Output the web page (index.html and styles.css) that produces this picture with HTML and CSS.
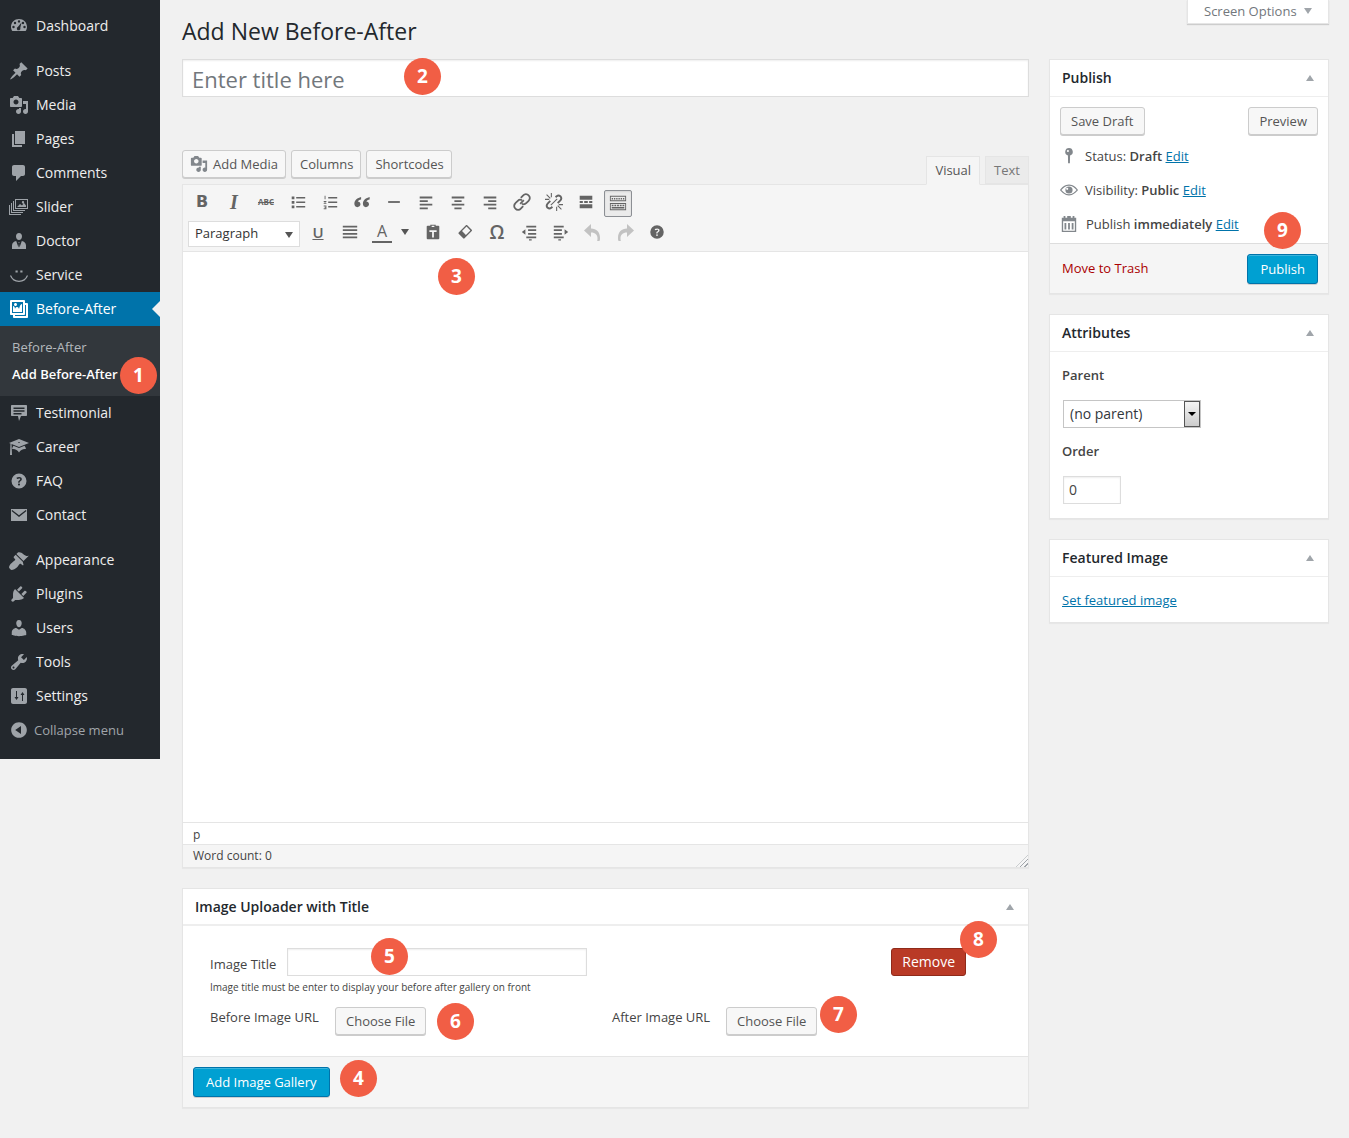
FILE: index.html
```html
<!doctype html>
<html lang="en-US">

<head>
    <meta charset="utf-8" />
    <title>Add New Before-After</title>

    <link rel="stylesheet" href="styles.css">
</head>

<body>
    <svg class="sprite" xmlns="http://www.w3.org/2000/svg">
        <symbol id="i-dashboard" viewBox="0 0 20 20"><path fill-rule="evenodd" d="M10 3c4.400 0 8 3.400 8 7.700 0 1.700-.5 3.200-1.400 4.300H3.400C2.500 13.900 2 12.400 2 10.700 2 6.400 5.600 3 10 3zM10 4.200a1.200 1.200 0 1 0 0 2.400 1.200 1.200 0 0 0 0-2.400zM6 5.800a1.200 1.200 0 1 0 0 2.400 1.200 1.200 0 0 0 0-2.400zM14 5.800a1.200 1.200 0 1 0 0 2.400 1.200 1.200 0 0 0 0-2.400zM4.500 9.800a1.200 1.200 0 1 0 0 2.400 1.200 1.200 0 0 0 0-2.400zM15.500 9.800a1.200 1.200 0 1 0 0 2.400 1.200 1.200 0 0 0 0-2.400zM12.500 6.500L9 10.800a1.800 1.800 0 1 0 2.300 1z"/></symbol>
        <symbol id="i-post" viewBox="0 0 20 20"><path d="M10.440 3.020l1.820-1.820 6.360 6.350-1.830 1.820c-1.050-.68-2.480-.57-3.410.36l-.75.75c-.92.93-1.040 2.350-.35 3.410l-1.830 1.820-2.410-2.410-2.800 2.790c-.42.42-3.380 2.710-3.800 2.290s1.860-3.390 2.280-3.810l2.790-2.790L4.100 9.360l1.830-1.820c1.050.69 2.480.57 3.400-.36l.75-.75c.93-.92 1.050-2.350.36-3.410z"/></symbol>
        <symbol id="i-media" viewBox="0 0 20 20"><path fill-rule="evenodd" d="M13 11V4c0-.55-.45-1-1-1h-1.670L9 1H5L3.670 3H2c-.55 0-1 .45-1 1v7c0 .55.45 1 1 1h10c.55 0 1-.45 1-1zM7 4.500c1.380 0 2.500 1.120 2.500 2.500S8.380 9.500 7 9.500 4.500 8.380 4.500 7 5.620 4.500 7 4.500zM14 6h5v10.500c0 1.380-1.120 2.500-2.500 2.500S14 17.880 14 16.500s1.120-2.500 2.500-2.500c.17 0 .34.02.5.05V9h-3V6zm-4 8.050V13h2v3.500c0 1.380-1.120 2.500-2.500 2.500S7 17.880 7 16.500 8.120 14 9.500 14c.17 0 .34.02.5.05z"/></symbol>
        <symbol id="i-pages" viewBox="0 0 20 20"><path d="M6 15V2h10v13H6zm-1 1h8v2H3V5h2v11z"/></symbol>
        <symbol id="i-comments" viewBox="0 0 20 20"><path d="M5 2h9c1.100 0 2 .9 2 2v7c0 1.100-.9 2-2 2h-2l-5 5v-5H5c-1.100 0-2-.9-2-2V4c0-1.100.9-2 2-2z"/></symbol>
        <symbol id="i-slider" viewBox="0 0 20 20"><path fill-rule="evenodd" d="M6 2h13v10H6zM7 3v8h11V3zM8 10l3-3 2 1.500 2-2.500 2 2.500V10zM14 4a1.200 1.200 0 1 0 0 2.400A1.200 1.200 0 0 0 14 4zM4 4h1v9h11v1H4zM2 6h1v9h11v1H2zM0 8h1v9h11v1H0z"/></symbol>
        <symbol id="i-doctor" viewBox="0 0 20 20"><path d="M10 2c1.900 0 3 1.400 3 3.200 0 2-1.200 3.800-3 3.800S7 7.200 7 5.200C7 3.400 8.100 2 10 2zM7.200 10l2.300 6.500.5-4-.6-1.500h1.200l-.6 1.500.5 4 2.300-6.500c2.300.3 4.200 1.900 4.200 4.500V18H3v-3.500C3 11.900 4.900 10.300 7.200 10z"/></symbol>
        <symbol id="i-service" viewBox="0 0 20 20"><path d="M6.500 5.500h2.200v2H6.500zM11.300 5.500h2.200v2h-2.200z"/><path d="M1.500 10.500c1.500 3.700 4.700 5.800 8.500 5.800s7-2.100 8.500-5.800" fill="none" stroke="currentColor" stroke-width="1.200"/></symbol>
        <symbol id="i-gallery" viewBox="0 0 20 20"><path fill-rule="evenodd" d="M16 4h1.960c.57 0 1.040.47 1.040 1.040v12.920c0 .57-.47 1.040-1.040 1.040H5.040C4.470 19 4 18.530 4 17.960V16H2.040C1.470 16 1 15.530 1 14.960V2.040C1 1.470 1.470 1 2.040 1h12.920c.57 0 1.040.47 1.040 1.040V4zM3 14h11V3H3v11zm5-8.500C8 4.670 7.330 4 6.500 4S5 4.670 5 5.500 5.670 7 6.500 7 8 6.330 8 5.500zm2 4.500s1-5 3-5v8H4V7c2 0 2 3 2 3s.33-2 2-2 2 2 2 2zm7 7V6h-1v8.960c0 .57-.47 1.040-1.040 1.040H6v1h11z"/></symbol>
        <symbol id="i-status" viewBox="0 0 20 20"><path fill-rule="evenodd" d="M3 2h14c.6 0 1 .4 1 1v9c0 .6-.4 1-1 1h-5l-2 5-1-5H3c-.6 0-1-.4-1-1V3c0-.6.4-1 1-1zM4.500 4.500v1.500h11V4.500zM4.500 7.200v1.500h11V7.200zM4.500 9.900v1.500h8V9.900z"/></symbol>
        <symbol id="i-learn" viewBox="0 0 20 20"><path fill-rule="evenodd" d="M10 10L2.540 7.020 3 18H1l.48-11.410L0 6l10-4 10 4zm0-5c-.55 0-1 .22-1 .5s.45.5 1 .5 1-.22 1-.5-.45-.5-1-.5zm0 6l5.570-2.230c.71.94 1.200 2.070 1.360 3.300-.3-.04-.61-.07-.93-.07-2.550 0-4.780 1.370-6 3.410C8.780 13.370 6.550 12 4 12c-.32 0-.63.03-.93.07.16-1.230.65-2.360 1.360-3.300z"/></symbol>
        <symbol id="i-help" viewBox="0 0 20 20"><path fill-rule="evenodd" d="M10 2.500a7.500 7.500 0 1 0 0 15 7.500 7.500 0 0 0 0-15zM10.800 11.800H9.200v-.5c0-.4.1-.7.2-1 .2-.3.4-.5.8-.8.4-.3.6-.5.8-.7.1-.2.2-.4.2-.6 0-.3-.1-.5-.3-.6-.2-.1-.5-.2-.8-.2-.6 0-1.200.2-2 .6l-.7-1.300c.9-.5 1.800-.7 2.800-.7.8 0 1.400.2 1.900.6s.7.9.7 1.600c0 .4-.1.8-.3 1.100-.2.3-.6.7-1.100 1-.4.3-.6.5-.7.6-.1.2-.1.4-.1.6zM10 12.400c.6 0 1 .4 1 1s-.4 1-1 1-1-.4-1-1 .4-1 1-1z"/></symbol>
        <symbol id="i-mail" viewBox="0 0 20 20"><path fill-rule="evenodd" d="M2 4h16v12H2zM3.200 5l6.800 5.200L16.800 5l.7 1-7.500 6-7.500-6z"/></symbol>
        <symbol id="i-appearance" viewBox="0 0 20 20"><path d="M14.480 11.060L7.410 3.990l1.500-1.500c.5-.56 2.300-.47 3.510.32 1.210.8 1.430 1.280 2.910 2.100 1.180.64 2.450 1.260 4.450.85zm-.71.71L6.700 4.700 4.930 6.470c-.39.39-.39 1.020 0 1.410l1.060 1.060c.39.39.39 1.030 0 1.420-.6.6-1.430 1.110-2.210 1.690-.35.26-.7.53-1.010.84C1.430 13.230 0 16.240 0 17.180 0 18.130 1.870 20 2.820 20c.94 0 3.950-1.430 5.290-2.770.31-.31.58-.66.84-1.010.58-.78 1.090-1.610 1.690-2.210.39-.39 1.030-.39 1.420 0l1.060 1.060c.39.39 1.020.39 1.410 0z"/></symbol>
        <symbol id="i-plugins" viewBox="0 0 20 20"><path d="M13.110 4.360L9.870 7.600 8 5.730l3.240-3.240c.35-.34 1.050-.2 1.560.32.52.51.66 1.210.31 1.550zm-8 1.770l.91-1.120 9.010 9.010-1.190.84c-.71.71-2.630 1.160-3.820 1.160H6.140L4.900 17.260c-.59.59-1.540.59-2.120 0-.59-.58-.59-1.530 0-2.120l1.240-1.240v-3.880c0-1.130.4-3.190 1.090-3.890zm7.260 3.970l3.240-3.240c.34-.35 1.040-.21 1.550.31.52.51.66 1.210.31 1.550l-3.240 3.250z"/></symbol>
        <symbol id="i-users" viewBox="0 0 20 20"><path d="M10 9.250c-2.270 0-2.730-3.440-2.730-3.440C7 4.020 7.820 2 9.970 2c2.160 0 2.980 2.020 2.710 3.810 0 0-.41 3.440-2.680 3.440zm0 2.570L12.720 10c2.390 0 4.520 2.330 4.520 4.530v2.490s-3.650 1.130-7.240 1.130c-3.650 0-7.240-1.130-7.240-1.130v-2.490c0-2.250 1.940-4.480 4.470-4.480z"/></symbol>
        <symbol id="i-tools" viewBox="0 0 20 20"><path fill-rule="evenodd" d="M16.680 9.770c-1.340 1.340-3.300 1.670-4.950.99l-5.410 6.520c-.99.99-2.590.99-3.580 0s-.99-2.590 0-3.570l6.520-5.420c-.68-1.650-.35-3.610.99-4.950 1.280-1.280 3.120-1.620 4.720-1.060l-2.890 2.890 2.820 2.820 2.860-2.870c.53 1.580.18 3.390-1.080 4.650zM3.810 16.210c.4.39 1.040.39 1.430 0 .4-.4.4-1.040 0-1.430-.39-.4-1.030-.4-1.430 0-.39.39-.39 1.030 0 1.430z"/></symbol>
        <symbol id="i-settings" viewBox="0 0 20 20"><path fill-rule="evenodd" d="M18 16V4c0-1.100-.9-2-2-2H4c-1.100 0-2 .9-2 2v12c0 1.100.9 2 2 2h12c1.100 0 2-.9 2-2zM8 11h1.500L7.500 14l-2-3H7V5h1zM13 9h-1.500l2-3 2 3H14v6h-1z"/></symbol>
        <symbol id="i-collapse" viewBox="0 0 20 20"><path fill-rule="evenodd" d="M10 2.160c4.330 0 7.840 3.510 7.840 7.840s-3.510 7.840-7.840 7.840S2.160 14.330 2.160 10 5.710 2.160 10 2.160zm2 11.720V6.120L6.180 9.970z"/></symbol>
        <symbol id="i-ul" viewBox="0 0 20 20"><path d="M3 4h3v3H3zM3 9h3v3H3zM3 14h3v3H3zM8 4.500h10V6H8zM8 9.500h10V11H8zM8 14.500h10V16H8z"/></symbol>
        <symbol id="i-ol" viewBox="0 0 20 20"><path d="M8 4.500h10V6H8zM8 9.500h10V11H8zM8 14.500h10V16H8z"/><path d="M4 3h1v4H4zM3 9h3v1l-2 1h2v1H3v-1l2-1H3zM3 14h3v4H3v-1h2v-.5H4v-1h1V15H3z"/></symbol>
        <symbol id="i-quote" viewBox="0 0 20 20"><path d="M9 4.500C5 5.500 1.500 8 1.500 12c0 2.200 1.400 3.700 3.300 3.700S8.300 14.400 8.300 12.600 7 9.500 5.300 9.500C5.600 8.500 7.300 7.500 9 7.200zM18.500 4.500C14.500 5.500 11 8 11 12c0 2.200 1.400 3.700 3.300 3.700s3.500-1.300 3.500-3.100-1.300-3.100-3-3.100c.3-1 2-2 3.700-2.300z"/></symbol>
        <symbol id="i-hr" viewBox="0 0 20 20"><path d="M3.500 9h13v2h-13z"/></symbol>
        <symbol id="i-left" viewBox="0 0 20 20"><path d="M3 4h14v2H3zM3 8h9v2H3zM3 12h14v2H3zM3 16h9v2H3z"/></symbol>
        <symbol id="i-center" viewBox="0 0 20 20"><path d="M3 4h14v2H3zM6 8h8v2H6zM3 12h14v2H3zM6 16h8v2H6z"/></symbol>
        <symbol id="i-right" viewBox="0 0 20 20"><path d="M3 4h14v2H3zM8 8h9v2H8zM3 12h14v2H3zM8 16h9v2H8z"/></symbol>
        <symbol id="i-link" viewBox="2.500 2.500 15 15"><path fill="none" stroke="currentColor" stroke-width="1.500" d="M8.500 11.500l3-3M9 6.500l2-2a3 3 0 0 1 4.500 0 3 3 0 0 1 0 4.500l-2 2a3 3 0 0 1-3.500.5M11 13.500l-2 2a3 3 0 0 1-4.500 0 3 3 0 0 1 0-4.500l2-2a3 3 0 0 1 3.500-.5"/></symbol>
        <symbol id="i-unlink" viewBox="1.500 1.500 17 17"><path fill="none" stroke="currentColor" stroke-width="1.800" d="M11.500 5.500l1-1a3 3 0 0 1 3.500 0 3 3 0 0 1 0 4l-2.500 2.500M8.500 14.500l-1 1a3 3 0 0 1-3.500 0 3 3 0 0 1 0-4L6.500 9"/><path fill="none" stroke="currentColor" d="M3 3l3.500 3.500M7.500 1.500v4M1.500 7.500h4M17 17l-3.500-3.500M12.500 18.500v-4M18.500 12.500h-4M13 7l-6 6"/></symbol>
        <symbol id="i-more" viewBox="0 0 20 20"><path d="M3 3h14v4.500H3zM3 12.500h14V17H3zM3 9h3.500v2H3zM8 9h4v2H8zM13.500 9H17v2h-3.500z"/></symbol>
        <symbol id="i-kitchen" viewBox="0 0 20 20"><path fill-rule="evenodd" d="M1 2h18v6H1zM2 3v4h16V3zM3 4.500h1.500V6H3zM5.500 4.500H7V6H5.500zM8 4.500h1.500V6H8zM10.500 4.500H12V6h-1.500zM13 4.500h1.500V6H13zM15.500 4.500H17V6h-1.500zM1 10h18v8H1zM2 11v6h16v-6zM3 12h2v1.500H3zM6 12h2v1.500H6zM9 12h2v1.500H9zM12 12h2v1.500h-2zM15 12h2v1.500h-2zM3 14.500h14V16H3z"/></symbol>
        <symbol id="i-justify" viewBox="0 0 20 20"><path d="M2 3h16v2H2zM2 7h16v2H2zM2 11h16v2H2zM2 15h16v2H2z"/></symbol>
        <symbol id="i-paste" viewBox="0 0 20 20"><path fill-rule="evenodd" d="M7 3V2h6v1h3c.6 0 1 .4 1 1v13c0 .6-.4 1-1 1H4c-.6 0-1-.4-1-1V4c0-.6.4-1 1-1zM8.500 3v1.500h3V3zM6 8v2h3v6h2v-6h3V8z"/></symbol>
        <symbol id="i-eraser" viewBox="0 0 20 20"><path fill-rule="evenodd" d="M12.500 2.500l5 5c.5.5.5 1 0 1.500l-8 8c-.5.5-1 .5-1.500 0l-5-5c-.5-.5-.5-1 0-1.500l8-8c.5-.5 1-.5 1.500 0zM11.700 4L6.700 9 11 13.300 16 8.300z"/></symbol>
        <symbol id="i-outdent" viewBox="0 0 20 20"><path d="M7 3h11v2H7zM9 7h9v2H9zM9 11h9v2H9zM7 15h11v2H7zM10 18h3v1.500h-3zM2 10l4-3v6z"/></symbol>
        <symbol id="i-indent" viewBox="0 0 20 20"><path d="M2 3h11v2H2zM2 7h9v2H2zM2 11h9v2H2zM2 15h11v2H2zM7 18h3v1.500H7zM18 10l-4-3v6z"/></symbol>
        <symbol id="i-undo" viewBox="1 1 18 18"><path d="M8 2v4.500c5.500 0 9 3.500 9 9.500 0 1 0 2-.5 3h-2.300c.3-1 .3-2 .3-3 0-3-2-5.500-6.500-5.500V15L1 8.500z"/></symbol>
        <symbol id="i-redo" viewBox="1 1 18 18"><path d="M12 2v4.500C6.500 6.500 3 10 3 16c0 1 0 2 .5 3h2.300c-.3-1-.3-2-.3-3 0-3 2-5.500 6.500-5.500V15L19 8.500z"/></symbol>
        <symbol id="i-pin" viewBox="0 0 20 20"><path fill-rule="evenodd" d="M10 1a4.300 4.300 0 0 1 1.200 8.400L11 18H9l-.2-8.600A4.300 4.300 0 0 1 10 1zM8.800 3.200a1.200 1.200 0 1 0 0 2.400 1.200 1.200 0 0 0 0-2.400z"/></symbol>
        <symbol id="i-eye" viewBox="0 0 20 20"><path fill-rule="evenodd" d="M10 4c4.500 0 8 3.300 10 6-2 2.700-5.500 6-10 6S2 12.700 0 10c2-2.700 5.500-6 10-6zM10 5.200c-3.500 0-6.400 2.400-8.400 4.800 2 2.400 4.900 4.800 8.400 4.800s6.400-2.400 8.400-4.800c-2-2.400-4.900-4.800-8.400-4.800zM10 6a4 4 0 1 1 0 8 4 4 0 0 1 0-8zM8 7.500a1.200 1.200 0 1 0 0 2.400 1.200 1.200 0 0 0 0-2.400z"/></symbol>
        <symbol id="i-calendar" viewBox="0 0 20 20"><path fill-rule="evenodd" d="M4 1h2v2h2V1h4v2h2V1h2v2h2v16H2V3h2zM3.500 7v10.500h13V7zM5 9h2v7H5zM9 9h2v7H9zM13 9h2v7h-2z"/></symbol>
    </svg>

    <div class="badge badge-1">1</div>
    <div class="badge badge-2">2</div>
    <div class="badge badge-3">3</div>
    <div class="badge badge-4">4</div>
    <div class="badge badge-5">5</div>
    <div class="badge badge-6">6</div>
    <div class="badge badge-7">7</div>
    <div class="badge badge-8">8</div>
    <div class="badge badge-9">9</div>

    <div class="page">
        <nav class="sidebar">
            <a class="menu-item"><svg class="menu-ico"><use href="#i-dashboard"/></svg>Dashboard</a>
            <div class="menu-sep"></div>
            <a class="menu-item"><svg class="menu-ico"><use href="#i-post"/></svg>Posts</a>
            <a class="menu-item"><svg class="menu-ico"><use href="#i-media"/></svg>Media</a>
            <a class="menu-item"><svg class="menu-ico"><use href="#i-pages"/></svg>Pages</a>
            <a class="menu-item"><svg class="menu-ico"><use href="#i-comments"/></svg>Comments</a>
            <a class="menu-item"><svg class="menu-ico"><use href="#i-slider"/></svg>Slider</a>
            <a class="menu-item"><svg class="menu-ico"><use href="#i-doctor"/></svg>Doctor</a>
            <a class="menu-item"><svg class="menu-ico"><use href="#i-service"/></svg>Service</a>
            <a class="menu-item current"><svg class="menu-ico"><use href="#i-gallery"/></svg>Before-After</a>
            <div class="submenu">
                <a class="sub-item">Before-After</a>
                <a class="sub-item active">Add Before-After</a>
            </div>
            <a class="menu-item"><svg class="menu-ico"><use href="#i-status"/></svg>Testimonial</a>
            <a class="menu-item"><svg class="menu-ico"><use href="#i-learn"/></svg>Career</a>
            <a class="menu-item"><svg class="menu-ico"><use href="#i-help"/></svg>FAQ</a>
            <a class="menu-item"><svg class="menu-ico"><use href="#i-mail"/></svg>Contact</a>
            <div class="menu-sep"></div>
            <a class="menu-item"><svg class="menu-ico"><use href="#i-appearance"/></svg>Appearance</a>
            <a class="menu-item"><svg class="menu-ico"><use href="#i-plugins"/></svg>Plugins</a>
            <a class="menu-item"><svg class="menu-ico"><use href="#i-users"/></svg>Users</a>
            <a class="menu-item"><svg class="menu-ico"><use href="#i-tools"/></svg>Tools</a>
            <a class="menu-item"><svg class="menu-ico"><use href="#i-settings"/></svg>Settings</a>
            <a class="menu-item collapse"><svg class="menu-ico"><use href="#i-collapse"/></svg>Collapse menu</a>
        </nav>

        <main class="content">
            <div class="screen-meta">
                <div class="screen-options">Screen Options<span class="caret-down"></span></div>
            </div>
            <h1>Add New Before-After</h1>

            <div class="columns">
                <div class="col-main">
                    <div class="title-input">Enter title here</div>

                    <div class="editor-head">
                        <button class="btn btn-media"><svg class="btn-ico"><use href="#i-media"/></svg>Add Media</button>
                        <button class="btn">Columns</button>
                        <button class="btn">Shortcodes</button>
                        <div class="tabs">
                            <div class="tab on">Visual</div>
                            <div class="tab">Text</div>
                        </div>
                    </div>

                    <div class="editor">
                        <div class="toolbar">
                            <div class="tb-row">
                                <span class="tb tb-b">B</span>
                                <span class="tb tb-i">I</span>
                                <span class="tb tb-abc">ABC</span>
                                <span class="tb"><svg class="ico"><use href="#i-ul"/></svg></span>
                                <span class="tb"><svg class="ico"><use href="#i-ol"/></svg></span>
                                <span class="tb"><svg class="ico"><use href="#i-quote"/></svg></span>
                                <span class="tb"><svg class="ico"><use href="#i-hr"/></svg></span>
                                <span class="tb"><svg class="ico"><use href="#i-left"/></svg></span>
                                <span class="tb"><svg class="ico"><use href="#i-center"/></svg></span>
                                <span class="tb"><svg class="ico"><use href="#i-right"/></svg></span>
                                <span class="tb"><svg class="ico"><use href="#i-link"/></svg></span>
                                <span class="tb"><svg class="ico"><use href="#i-unlink"/></svg></span>
                                <span class="tb"><svg class="ico"><use href="#i-more"/></svg></span>
                                <span class="tb pressed"><svg class="ico"><use href="#i-kitchen"/></svg></span>
                            </div>
                            <div class="tb-row">
                                <div class="format-select">Paragraph<span class="caret-down dark"></span></div>
                                <span class="tb tb-u">U</span>
                                <span class="tb"><svg class="ico"><use href="#i-justify"/></svg></span>
                                <span class="tb tb-split"><span class="tb-a">A</span><span class="caret-down dark"></span></span>
                                <span class="tb"><svg class="ico"><use href="#i-paste"/></svg></span>
                                <span class="tb"><svg class="ico"><use href="#i-eraser"/></svg></span>
                                <span class="tb tb-omega">Ω</span>
                                <span class="tb"><svg class="ico"><use href="#i-outdent"/></svg></span>
                                <span class="tb"><svg class="ico"><use href="#i-indent"/></svg></span>
                                <span class="tb off"><svg class="ico"><use href="#i-undo"/></svg></span>
                                <span class="tb off"><svg class="ico"><use href="#i-redo"/></svg></span>
                                <span class="tb"><svg class="ico"><use href="#i-help"/></svg></span>
                            </div>
                        </div>
                        <div class="edit-area"></div>
                        <div class="path-row">p</div>
                        <div class="count-row">Word count: 0<span class="resize"></span></div>
                    </div>

                    <section class="uploader">
                        <div class="box-head">Image Uploader with Title<span class="caret-up"></span></div>
                        <div class="uploader-body">
                            <div class="up-row">
                                <label class="up-title-label">Image Title</label>
                                <div class="text-input up-title"></div>
                                <button class="btn btn-remove">Remove</button>
                            </div>
                            <p class="up-hint">Image title must be enter to display your before after gallery on front</p>
                            <div class="up-files">
                                <div class="up-file before">
                                    <label>Before Image URL</label>
                                    <button class="btn">Choose File</button>
                                </div>
                                <div class="up-file after">
                                    <label>After Image URL</label>
                                    <button class="btn">Choose File</button>
                                </div>
                            </div>
                        </div>
                        <div class="uploader-foot">
                            <button class="btn btn-primary">Add Image Gallery</button>
                        </div>
                    </section>
                </div>

                <aside class="col-side">
                    <section class="box">
                        <div class="box-head">Publish<span class="caret-up"></span></div>
                        <div class="pub-actions">
                            <button class="btn">Save Draft</button>
                            <button class="btn">Preview</button>
                        </div>
                        <div class="pub-row"><svg class="pub-ico"><use href="#i-pin"/></svg><span>Status: <b>Draft</b> <a>Edit</a></span></div>
                        <div class="pub-row"><svg class="pub-ico"><use href="#i-eye"/></svg><span>Visibility: <b>Public</b> <a>Edit</a></span></div>
                        <div class="pub-row"><svg class="pub-ico"><use href="#i-calendar"/></svg><span class="pub-when">Publish <b>immediately</b> <a>Edit</a></span></div>
                        <div class="pub-foot">
                            <a class="trash">Move to Trash</a>
                            <button class="btn btn-primary">Publish</button>
                        </div>
                    </section>

                    <section class="box">
                        <div class="box-head">Attributes<span class="caret-up"></span></div>
                        <div class="attrs">
                            <p class="attr-label first">Parent</p>
                            <div class="fake-select">(no parent)<span class="fake-arrow"></span></div>
                            <p class="attr-label">Order</p>
                            <div class="text-input order">0</div>
                        </div>
                    </section>

                    <section class="box">
                        <div class="box-head">Featured Image<span class="caret-up"></span></div>
                        <div class="featured"><a>Set featured image</a></div>
                    </section>
                </aside>
            </div>
        </main>
    </div>
</body>

</html>
```

FILE: styles.css
```css
html,
body {
    margin: 0;
    padding: 0;
}

body {
    position: relative;
    background-color: #f1f1f1;
    color: #444;
    font-family: "Open Sans", sans-serif;
    font-size: 13px;
    line-height: 1.4;
    height: 1138px;
    overflow: hidden;
}

.sprite {
    display: none;
}

a {
    color: #0073aa;
}

p {
    margin: 0;
}

.page {
    display: flex;
    align-items: flex-start;
}

/* sidebar */
.sidebar {
    width: 160px;
    flex: none;
    background-color: #23282d;
    padding: 9px 0 12px;
}

.menu-item {
    display: flex;
    align-items: center;
    height: 34px;
    color: #eee;
    font-size: 14px;
}

.menu-ico {
    width: 20px;
    height: 20px;
    margin: 0 7px 0 9px;
    fill: #9ea3a8;
    color: #9ea3a8;
    flex: none;
}

.menu-sep {
    height: 11px;
}

.menu-item.current {
    position: relative;
    background-color: #0073aa;
    color: #fff;
}

.menu-item.current .menu-ico {
    fill: #fff;
    color: #fff;
}

.menu-item.current::after {
    content: "";
    position: absolute;
    right: 0;
    top: 9px;
    border: 8px solid transparent;
    border-right-color: #f1f1f1;
    border-left-width: 0;
}

.menu-item.collapse {
    color: #a0a5aa;
    font-size: 13px;
}

.menu-item.collapse .menu-ico {
    margin-right: 5px;
}

.submenu {
    background-color: #32373c;
    height: 70px;
    padding-top: 7px;
    box-sizing: border-box;
}

.sub-item {
    display: block;
    padding-left: 12px;
    height: 27px;
    line-height: 28px;
    color: #b4b9be;
    font-size: 13px;
}

.sub-item.active {
    color: #fff;
    font-weight: 600;
}

/* page head */
.content {
    flex: 1;
    min-width: 0;
    padding: 0 20px 0 22px;
}

.screen-meta {
    display: flex;
    justify-content: flex-end;
    height: 0;
}

.screen-options {
    width: 142px;
    height: 24px;
    flex: none;
    box-sizing: border-box;
    background-color: #fff;
    box-shadow: 0 1px 1px rgba(0, 0, 0, 0.15);
    color: #72777c;
    line-height: 23px;
    padding-left: 16px;
    border: 1px solid #e5e5e5;
    border-top: 0;
}

.caret-down {
    display: inline-block;
    border: 4px solid transparent;
    border-top: 6px solid #a0a5aa;
    border-bottom: 0;
    margin-left: 7px;
    vertical-align: 2px;
}

.caret-down.dark {
    border-top-color: #555;
}

.caret-up {
    position: absolute;
    right: 14px;
    top: 15px;
    border: 4px solid transparent;
    border-bottom: 6px solid #a0a5aa;
    border-top: 0;
}

h1 {
    margin: 0;
    height: 59px;
    box-sizing: border-box;
    padding-top: 17px;
    font-size: 23px;
    font-weight: 400;
    line-height: 29px;
    color: #23282d;
}

.columns {
    display: flex;
    align-items: flex-start;
    gap: 20px;
}

.col-main {
    flex: 1;
    min-width: 0;
}

.col-side {
    width: 280px;
    flex: none;
}

/* buttons */
.btn {
    height: 28px;
    box-sizing: border-box;
    padding: 0 10px;
    border: 1px solid #ccc;
    border-radius: 3px;
    background-color: #f7f7f7;
    box-shadow: 0 1px 0 #ccc;
    color: #555;
    font-family: "Open Sans", sans-serif;
    font-size: 13px;
    line-height: 26px;
    white-space: nowrap;
}

.btn-primary {
    height: 30px;
    background-color: #00a0d2;
    border-color: #0073aa;
    box-shadow: inset 0 1px 0 rgba(120, 200, 230, 0.5), 0 1px 0 rgba(0, 0, 0, 0.15);
    color: #fff;
    padding: 0 12px;
}

.btn-remove {
    margin-left: auto;
    margin-right: 62px;
    background-color: #b93a26;
    border-color: #8f2a1a;
    box-shadow: none;
    color: #fff;
    font-size: 14px;
}

.btn-ico {
    width: 18px;
    height: 18px;
    fill: #82878c;
    vertical-align: -4px;
    margin: 0 5px 0 0;
}

.text-input {
    box-sizing: border-box;
    height: 28px;
    background-color: #fff;
    border: 1px solid #ddd;
    box-shadow: inset 0 1px 2px rgba(0, 0, 0, 0.07);
}

/* title and editor */
.title-input {
    box-sizing: border-box;
    height: 38px;
    padding-left: 9px;
    background-color: #fff;
    border: 1px solid #ddd;
    box-shadow: inset 0 1px 2px rgba(0, 0, 0, 0.07);
    color: #72777c;
    font-size: 22px;
    line-height: 38px;
}

.editor-head {
    display: flex;
    align-items: flex-start;
    gap: 5px;
    height: 34px;
    margin-top: 53px;
}

.editor-head .btn {
    padding: 0 7px 0 8px;
}

.editor-head .btn-media {
    padding: 0 7px;
}

.tabs {
    display: flex;
    gap: 5px;
    margin-left: auto;
    margin-top: 6px;
}

.tab {
    box-sizing: border-box;
    height: 28px;
    padding: 0 8px;
    background-color: #ebebeb;
    border: 1px solid #e5e5e5;
    color: #777;
    line-height: 27px;
}

.tab.on {
    height: 29px;
    background-color: #f5f5f5;
    border-bottom-color: #f5f5f5;
    color: #555;
    position: relative;
}

.editor {
    background-color: #fff;
    border: 1px solid #e5e5e5;
    box-shadow: 0 1px 1px rgba(0, 0, 0, 0.04);
}

.toolbar {
    box-sizing: border-box;
    height: 67px;
    padding: 3px 5px 0;
    background-color: #f5f5f5;
    border-bottom: 1px solid #e5e5e5;
}

.tb-row {
    display: flex;
    align-items: center;
    gap: 4px;
    height: 30px;
}

.tb {
    display: flex;
    align-items: center;
    justify-content: center;
    box-sizing: border-box;
    width: 28px;
    height: 28px;
    padding-bottom: 2px;
    flex: none;
    color: #646464;
    fill: #646464;
}

.ico {
    width: 18px;
    height: 18px;
}

.tb.pressed {
    height: 27px;
    margin-top: 1px;
    padding-bottom: 1px;
    background-color: #ebebeb;
    border: 1px solid #8c8f94;
    border-radius: 2px;
    box-shadow: inset 0 1px 2px rgba(0, 0, 0, 0.1);
}

.tb.off {
    color: #c2c2c2;
    fill: #c2c2c2;
}

.tb-b {
    font-family: "DejaVu Sans", sans-serif;
    font-size: 16px;
    font-weight: 700;
}

.tb-i {
    font-family: "Liberation Serif", serif;
    font-size: 20px;
    font-weight: 700;
    font-style: italic;
}

.tb-abc {
    font-size: 8px;
    font-weight: 700;
    text-decoration: line-through;
}

.tb-u {
    font-size: 15px;
    font-weight: 600;
    text-decoration: underline;
}

.tb-omega {
    font-size: 19px;
    font-weight: 600;
}

.tb-split {
    width: 47px;
    justify-content: flex-start;
}

.tb-a {
    width: 20px;
    margin-left: 4px;
    border-bottom: 2px solid #646464;
    text-align: center;
    font-size: 16px;
    line-height: 20px;
}

.tb-split .caret-down {
    margin-left: 9px;
}

.format-select {
    position: relative;
    box-sizing: border-box;
    width: 112px;
    height: 26px;
    margin-top: 1px;
    padding-left: 6px;
    background-color: #fff;
    border: 1px solid #ddd;
    color: #333;
    line-height: 23px;
}

.format-select .caret-down {
    position: absolute;
    right: 6px;
    top: 10px;
}

.edit-area {
    height: 570px;
}

.path-row {
    box-sizing: border-box;
    height: 22px;
    padding-left: 10px;
    border-top: 1px solid #e5e5e5;
    font-size: 12px;
    line-height: 24px;
    color: #444;
}

.count-row {
    position: relative;
    box-sizing: border-box;
    height: 23px;
    padding-left: 10px;
    border-top: 1px solid #e5e5e5;
    background-color: #f5f5f5;
    font-size: 12px;
    line-height: 22px;
    color: #444;
}

.resize {
    position: absolute;
    right: 0;
    bottom: 0;
    width: 12px;
    height: 12px;
    background: repeating-linear-gradient(135deg, transparent 0 2px, #a0a5aa 2px 3px);
    clip-path: polygon(100% 0, 100% 100%, 0 100%);
}

/* uploader */
.uploader {
    position: relative;
    margin-top: 20px;
    background-color: #fff;
    border: 1px solid #e5e5e5;
    box-shadow: 0 1px 1px rgba(0, 0, 0, 0.04);
}

.box-head {
    position: relative;
    box-sizing: border-box;
    height: 37px;
    padding-left: 12px;
    border-bottom: 1px solid #eee;
    color: #23282d;
    font-size: 14px;
    font-weight: 600;
    line-height: 35px;
}

.uploader .box-head {
    height: 36px;
}

.uploader-body {
    box-sizing: border-box;
    height: 132px;
    padding: 22px 0 0 27px;
    border-top: 1px solid #eee;
    border-bottom: 1px solid #e5e5e5;
}

.up-row {
    display: flex;
    align-items: center;
}

.up-title-label {
    width: 77px;
    flex: none;
    padding-top: 4px;
}

.up-title {
    width: 300px;
}

.up-hint {
    margin-top: 4px;
    margin-bottom: 13px;
    font-size: 10px;
    line-height: 14px;
}

.up-files {
    display: flex;
}

.up-file {
    display: flex;
    align-items: flex-start;
}

.up-file label {
    line-height: 20px;
}

.up-file.before {
    width: 402px;
}

.up-file.before label {
    width: 125px;
}

.up-file.after label {
    width: 114px;
}

.uploader-foot {
    height: 50px;
    box-sizing: border-box;
    padding: 10px 10px 0;
    background-color: #f5f5f5;
}

/* side boxes */
.box {
    margin-bottom: 20px;
    background-color: #fff;
    border: 1px solid #e5e5e5;
    box-shadow: 0 1px 1px rgba(0, 0, 0, 0.04);
}

.pub-actions {
    display: flex;
    justify-content: space-between;
    padding: 10px 10px 4px;
}

.pub-row {
    display: flex;
    align-items: center;
    gap: 7px;
    height: 34px;
    padding-left: 10px;
}

.pub-row b {
    font-weight: 600;
}

.pub-row a {
    text-decoration: underline;
}

.pub-when {
    margin-left: 1px;
}

.pub-ico {
    width: 18px;
    height: 18px;
    fill: #82878c;
    flex: none;
}

.pub-foot {
    display: flex;
    align-items: flex-start;
    justify-content: space-between;
    height: 50px;
    box-sizing: border-box;
    margin-top: 2px;
    padding: 10px 10px 0 12px;
    background-color: #f5f5f5;
    border-top: 1px solid #ddd;
}

.pub-foot .btn {
    padding: 0 12px 0 13px;
}

.trash {
    margin-top: 5px;
    color: #a00;
}

.attrs {
    height: 166px;
    box-sizing: border-box;
    padding: 0 12px 0 13px;
}

.attr-label {
    margin-left: -1px;
    color: #444;
    font-weight: 600;
}

.attr-label.first {
    padding-top: 14px;
}

.fake-select {
    position: relative;
    box-sizing: border-box;
    width: 138px;
    height: 28px;
    margin: 16px 0 14px;
    padding-left: 6px;
    background-color: #fff;
    border: 1px solid #c5c5c5;
    font-size: 14px;
    line-height: 26px;
    color: #32373c;
}

.fake-arrow {
    position: absolute;
    right: 0;
    top: 0;
    bottom: 0;
    width: 16px;
    box-sizing: border-box;
    border: 1px solid #555;
    background: linear-gradient(#f5f5f5, #ccc);
}

.fake-arrow::after {
    content: "";
    position: absolute;
    left: 3px;
    top: 10px;
    border: 4px solid transparent;
    border-top: 4px solid #000;
    border-bottom: 0;
}

.order {
    width: 58px;
    margin-top: 16px;
    padding-left: 5px;
    font-size: 14px;
    line-height: 26px;
}

.featured {
    height: 45px;
    box-sizing: border-box;
    padding: 14px 12px 0;
}

.featured a {
    text-decoration: underline;
}

/* numbered markers */
.badge {
    position: absolute;
    z-index: 5;
    width: 37px;
    height: 37px;
    border-radius: 50%;
    background-color: #f15e45;
    color: #fff;
    font-size: 19px;
    font-weight: 700;
    line-height: 37px;
    text-align: center;
}

.badge-1 { left: 120px; top: 357px; }
.badge-2 { left: 404px; top: 58px; }
.badge-3 { left: 438px; top: 258px; }
.badge-4 { left: 340px; top: 1060px; }
.badge-5 { left: 371px; top: 938px; }
.badge-6 { left: 437px; top: 1003px; }
.badge-7 { left: 820px; top: 996px; }
.badge-8 { left: 960px; top: 921px; }
.badge-9 { left: 1264px; top: 212px; }
```
